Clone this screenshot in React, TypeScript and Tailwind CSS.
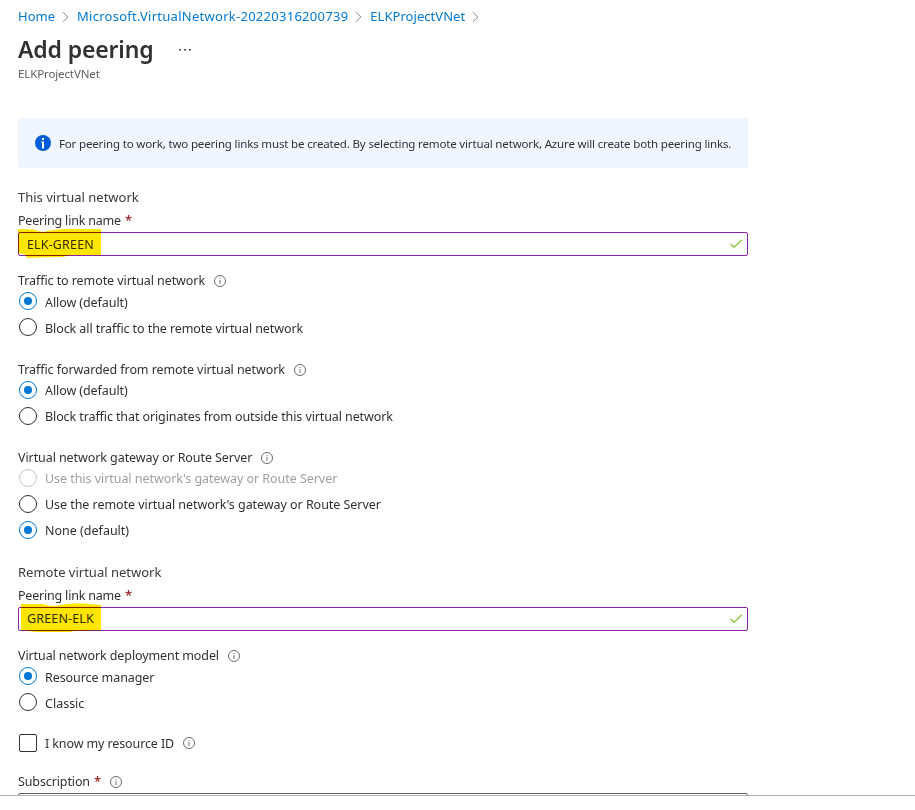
import React from "react";

function InfoIcon() {
  return (
    <svg width="12" height="12" viewBox="0 0 12 12" fill="none" className="shrink-0">
      <circle cx="6" cy="6" r="5.5" stroke="#6a6a6a" />
      <path d="M6 5v4M6 3v1" stroke="#7a7a7a" strokeWidth="1.1" />
    </svg>
  );
}

function Chevron() {
  return (
    <svg width="7" height="12" viewBox="0 0 7 12" fill="none" className="mx-[7px] mt-px shrink-0">
      <path d="M1 1.2L5.8 6L1 10.8" stroke="#8a8886" />
    </svg>
  );
}

function Star({ className = "" }: { className?: string }) {
  return <span className={`text-[13px] font-semibold text-[#a4262c] ${className}`}>*</span>;
}

function Label({ text, track = "tracking-[-0.08px]", className }: { text: string; track?: string; className: string }) {
  return (
    <div className={`flex items-center gap-[9px] text-[12.5px] whitespace-nowrap ${className}`}>
      <span className={track}>{text}</span>
      <InfoIcon />
    </div>
  );
}

type RadioProps = { text: string; track?: string; checked?: boolean; disabled?: boolean; low?: boolean };

function Radio({ text, track = "tracking-[-0.08px]", checked, disabled, low }: RadioProps) {
  const ring = checked ? "border-[#0078d4]" : disabled ? "border-[#c8c6c4]" : "border-[#323130]";
  return (
    <div className="flex h-[26px] items-center gap-2 pl-px">
      <span className={`flex size-[18px] shrink-0 items-center justify-center rounded-full border ${ring}`}>
        {checked && <span className="size-2 rounded-full bg-[#0078d4]" />}
      </span>
      <span className={`text-[12.5px] whitespace-nowrap ${low ? "pt-[5px]" : "pt-[3px]"} ${track} ${disabled ? "text-[#a19f9d]" : ""}`}>
        {text}
      </span>
    </div>
  );
}

function NameField({ value, marker, title, pad }: { value: string; marker: string; title: string; pad: string }) {
  return (
    <>
      <h2 className="flex h-[22px] items-center text-[13px] text-[#3b3a39]">{title}</h2>
      <div className="flex h-[23px] items-center gap-1 text-[12.5px]">
        <span className="pt-[2px] tracking-[-0.2px]">Peering link name</span>
        <Star />
      </div>
      <div className="relative flex h-6 items-center justify-between rounded-[2px] border border-[#8a23a5] bg-white pr-[5px] pl-2">
        <span className={`text-[12.5px] tracking-[0.15px] ${pad}`}>{value}</span>
        <svg width="12" height="10" viewBox="0 0 12 10" fill="none">
          <path d="M.5 4.8L4.1 8.3L11.7 .8" stroke="#6bb700" strokeWidth="1.1" />
        </svg>
        <svg className="absolute -top-[5px] -left-px mix-blend-multiply" width="84" height="32" viewBox="0 0 84 32">
          <path d={marker} fill="#ffe600" />
        </svg>
      </div>
    </>
  );
}

export default function App() {
  return (
    <div className="h-[810px] overflow-hidden bg-white font-['Noto_Sans','Open_Sans',sans-serif] text-[#323130]">
      <div className="h-[795px] w-[748px] overflow-hidden pl-[18px]">
        <nav className="flex h-[33px] items-center text-[13px] whitespace-nowrap text-[#0078d4]">
          <span>Home</span>
          <Chevron />
          <span className="ml-px tracking-[0.27px]">Microsoft.VirtualNetwork-20220316200739</span>
          <Chevron />
          <span className="ml-px tracking-[0.04px]">ELKProjectVNet</span>
          <Chevron />
        </nav>
        <header>
          <div className="flex h-[33px] items-center gap-[26px]">
            <h1 className="text-[23px] font-semibold tracking-[-0.15px] whitespace-nowrap">Add peering</h1>
            <svg width="12" height="2" viewBox="0 0 12 2" fill="#484644">
              <rect width="2" height="1.5" /><rect x="5" width="2" height="1.5" /><rect x="10" width="2" height="1.5" />
            </svg>
          </div>
          <p className="flex h-4 items-center text-[11.5px] tracking-[-0.12px] text-[#605e5c]">ELKProjectVNet</p>
        </header>

        <div className="mt-9 flex h-[50px] items-center rounded-[2px] bg-[#f0f6ff] pl-[17px]">
          <svg width="16" height="16" viewBox="0 0 16 16" className="shrink-0">
            <circle cx="8" cy="8" r="8" fill="#015cda" />
            <path d="M7 6.5h2v7H7zM6 6.5h2v1H6zM7 3h2v2H7z" fill="#fff" />
          </svg>
          <p className="ml-2 pt-[2px] text-[11.5px] tracking-[-0.155px] whitespace-nowrap">
            For peering to work, two peering links must be created. By selecting remote virtual network, Azure will create both peering links.
          </p>
        </div>

        <section className="mt-[19px]">
          <NameField
            title="This virtual network"
            value="ELK-GREEN"
            pad="pt-[2px]"
            marker="M0 1L15 1.5Q20 3 25 4Q42 0 62 1L83 1V27H60Q52 26 45 29Q28 29 9 30L8 27L0 25Z"
          />
          <Label className="mt-[18px] h-[14px]" text="Traffic to remote virtual network" />
          <Radio checked low text="Allow (default)" />
          <Radio low text="Block all traffic to the remote virtual network" />
          <Label className="mt-[23px] h-[14px]" text="Traffic forwarded from remote virtual network" />
          <Radio checked text="Allow (default)" />
          <Radio track="tracking-[-0.1px]" text="Block traffic that originates from outside this virtual network" />
          <Label className="mt-[22px] h-[14px]" text="Virtual network gateway or Route Server" />
          <Radio disabled track="tracking-[-0.05px]" text="Use this virtual network's gateway or Route Server" />
          <Radio track="tracking-[-0.05px]" text="Use the remote virtual network's gateway or Route Server" />
          <Radio checked track="tracking-[0px]" text="None (default)" />
        </section>

        <section className="mt-[19px]">
          <NameField
            title="Remote virtual network"
            value="GREEN-ELK"
            pad=""
            marker="M3 1H25Q31 3 37 3Q54 -1 70 1L83 2V27L68 28Q59 27 52 29H18L3 27Z"
          />
          <Label className="mt-[18px] h-[14px]" track="tracking-[-0.1px]" text="Virtual network deployment model" />
          <Radio checked low text="Resource manager" />
          <Radio low track="tracking-[0px]" text="Classic" />
          <div className="mt-[15px] flex h-[26px] items-center pl-px">
            <span className="size-[18px] shrink-0 rounded-[2px] border border-[#323130]" />
            <span className="mr-[9px] ml-2 pt-[3px] text-[12.5px] tracking-[-0.11px]">I know my resource ID</span>
            <InfoIcon />
          </div>
          <div className="mt-[15px] flex h-[22px] items-center text-[12.5px]">
            <span className="tracking-[-0.12px]">Subscription</span>
            <Star className="mr-[9px] ml-1" />
            <InfoIcon />
          </div>
          <div className="h-6 rounded-[2px] border border-[#605e5c]" />
        </section>
      </div>
      <div className="h-px bg-[#b3b3b3]" />
    </div>
  );
}
